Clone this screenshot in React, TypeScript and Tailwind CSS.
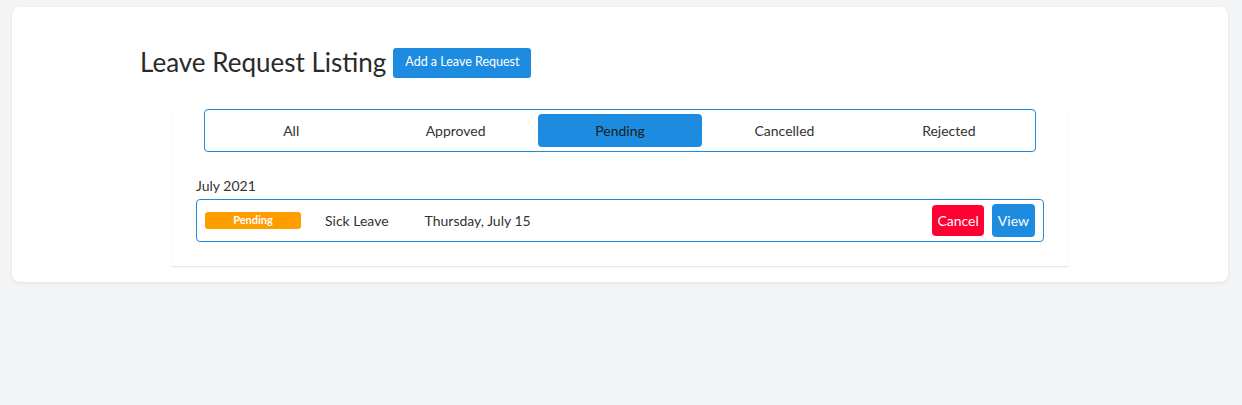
export default function App() {
  const tabs = ['All', 'Approved', 'Pending', 'Cancelled', 'Rejected'];
  const active = 'Pending';

  return (
    <div className="min-h-[405px] bg-[#f3f4f6] pl-3 pr-[14px] pt-[7px] font-['Lato','Noto_Sans',sans-serif] text-[#222]">
      <div className="rounded-lg bg-white pb-4 shadow-[0_1px_3px_rgba(0,0,0,0.08)]">
        <div className="mx-auto w-[960px] pt-[37px]">
          <div className="flex items-center gap-[7px]">
            <h1 className="text-[26px] leading-[36px] text-[#2a2a2a]">Leave Request Listing</h1>
            <button className="mt-[1px] h-[30px] rounded-[3px] bg-[#1d8ce0] px-[12px] text-[12.5px] text-white">
              Add a Leave Request
            </button>
          </div>
        </div>

        <div className="mx-auto mt-[29px] w-[896px] pb-6 shadow-[0_1px_1px_rgba(0,0,0,0.1)]">
          <div className="mx-8 flex h-[43px] items-center rounded border border-[#1d8ce0] px-[4px]">
            {tabs.map((t) => (
              <div
                key={t}
                className={`flex h-[33px] flex-1 items-center justify-center rounded text-[14px] ${
                  t === active ? 'bg-[#1d8ce0] text-[#1a1a1a]' : 'text-[#333]'
                }`}
              >
                {t}
              </div>
            ))}
          </div>

          <div className="mx-6 mt-[25px]">
            <div className="text-[14px] leading-[18px] text-[#333]">July 2021</div>
            <div className="mt-[4px] flex h-[43px] items-center rounded border border-[#1d8ce0] pl-[8px] pr-[8px]">
              <span className="flex h-[17px] w-[96px] items-center justify-center rounded-[3px] bg-[#ff9c00] text-[11px] font-bold text-white">
                Pending
              </span>
              <span className="ml-6 text-[14px] text-[#333]">Sick Leave</span>
              <span className="ml-9 text-[14px] text-[#333]">Thursday, July 15</span>
              <div className="ml-auto flex items-center gap-2">
                <button className="h-[31px] rounded bg-[#ff0032] px-[5px] text-[14px] text-white">Cancel</button>
                <button className="h-[33px] rounded bg-[#1d8ce0] px-[6px] text-[14px] text-white">View</button>
              </div>
            </div>
          </div>
        </div>
      </div>
    </div>
  );
}
